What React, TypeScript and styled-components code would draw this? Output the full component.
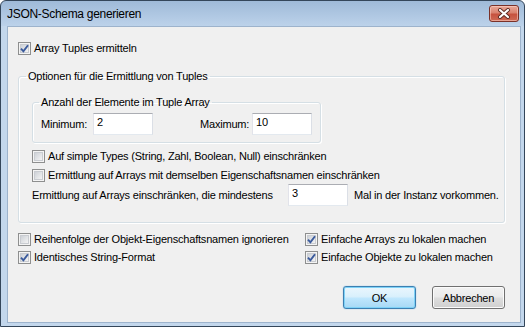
import styled, { createGlobalStyle } from 'styled-components';

const GlobalStyle = createGlobalStyle`
  html, body {
    margin: 0;
    padding: 0;
    background: #ffffff;
  }
  body {
    font-family: 'Liberation Sans', Arial, sans-serif;
    font-size: 11px;
    letter-spacing: -0.2px;
    color: #000000;
  }
`;

const Window = styled.div`
  box-sizing: border-box;
  width: 525px;
  height: 327px;
  border: 1px solid #34465a;
  border-radius: 6px 6px 0 0;
  padding: 0 3px 3px 6px;
  display: flex;
  flex-direction: column;
  background: linear-gradient(
    to bottom,
    #9fbad8 0px,
    #bcd2ea 25px,
    #c3d7ec 25px,
    #c3d7ec 100%
  );
`;

const TitleBar = styled.div`
  height: 25px;
  display: flex;
  justify-content: space-between;
  align-items: center;
`;

const Title = styled.span`
  font-size: 12px;
  letter-spacing: -0.3px;
  line-height: 14px;
`;

const CloseButton = styled.div`
  align-self: flex-start;
  margin: 4px 2px 0 0;
  box-sizing: border-box;
  width: 30px;
  height: 17px;
  border: 1px solid #7a3128;
  border-radius: 3px;
  background: linear-gradient(to bottom, #e9a897 0%, #d9826f 45%, #c6523f 55%, #cf6a55 100%);
  box-shadow: inset 0 0 0 1px rgba(255, 220, 210, 0.5);
  display: flex;
  align-items: center;
  justify-content: center;
`;

const Client = styled.div`
  flex: 1;
  display: flex;
  flex-direction: column;
  padding: 15px 15px 0 10px;
  border: 1px solid #9db3cc;
  background: #f0f0f0;
`;

const Option = styled.label`
  display: flex;
  align-items: center;
  gap: 3px;
  height: 13px;
  line-height: 13px;
  white-space: nowrap;
`;

const Box = styled.svg`
  flex-shrink: 0;
  display: block;
`;

const Group = styled.fieldset<{ $width?: number; $gap?: number }>`
  margin: ${({ $gap }) => $gap ?? 0}px 0 0 0;
  padding: 0;
  width: ${({ $width }) => ($width ? `${$width}px` : 'auto')};
  box-sizing: border-box;
  min-width: 0;
  border: 1px solid #d5dfe5;
  border-radius: 3px;
  box-shadow: inset 1px 1px 0 #ffffff, 1px 1px 0 #ffffff;
`;

const GroupTitle = styled.legend<{ $offset: number }>`
  margin-left: ${({ $offset }) => $offset}px;
  padding: 0 2px;
  line-height: 13px;
`;

const GroupBody = styled.div<{ $pad: string }>`
  display: flex;
  flex-direction: column;
  padding: ${({ $pad }) => $pad};
`;

const FieldRow = styled.div<{ $top?: number }>`
  display: flex;
  align-items: center;
  margin-top: ${({ $top }) => $top ?? 0}px;
`;

const FieldLabel = styled.span<{ $width: number; $lead?: number }>`
  flex-shrink: 0;
  width: ${({ $width }) => $width}px;
  margin-left: ${({ $lead }) => $lead ?? 0}px;
  white-space: nowrap;
`;

const TextBox = styled.input`
  flex-shrink: 0;
  box-sizing: border-box;
  width: 60px;
  height: 22px;
  margin: 0;
  padding: 1px 3px 5px;
  border: 1px solid;
  border-color: #abadb3 #dbdfe6 #e3e9ef #e2e3ea;
  background: #ffffff;
  font: inherit;
  letter-spacing: inherit;
  color: #000000;
  outline: none;
`;

const Trailing = styled.span`
  flex-shrink: 0;
  margin-left: 6px;
  white-space: nowrap;
`;

const Stack = styled.div<{ $top: number; $gap: number }>`
  display: flex;
  flex-direction: column;
  gap: ${({ $gap }) => $gap}px;
  margin-top: ${({ $top }) => $top}px;
`;

const OptionsGrid = styled.div`
  display: grid;
  grid-template-columns: 287px auto;
  row-gap: 5px;
  margin-top: 10px;
`;

const ButtonBar = styled.div`
  margin-top: auto;
  margin-bottom: 13px;
  display: flex;
  justify-content: flex-end;
  gap: 16px;
`;

const Button = styled.button<{ $primary?: boolean }>`
  box-sizing: border-box;
  width: 73px;
  height: 23px;
  margin: 0;
  padding: 0;
  font: inherit;
  letter-spacing: inherit;
  color: #000000;
  border-radius: 3px;
  border: 1px solid ${({ $primary }) => ($primary ? '#3c7fb1' : '#707070')};
  background: ${({ $primary }) =>
    $primary
      ? 'linear-gradient(to bottom, #eaf6fd 0%, #d9f0fc 45%, #bee6fd 55%, #a7d9f5 100%)'
      : 'linear-gradient(to bottom, #f2f2f2 0%, #ebebeb 45%, #dddddd 55%, #cfcfcf 100%)'};
  box-shadow: ${({ $primary }) =>
    $primary ? 'inset 0 0 0 1px #7ed2f7, 0 0 1px #48a7e6' : 'inset 0 0 0 1px #fbfbfb'};
`;

const CheckBox = ({ checked }: { checked?: boolean }) => (
  <Box width="13" height="13" viewBox="0 0 13 13">
    <defs>
      <linearGradient id="cb-fill" x1="0" y1="0" x2="1" y2="1">
        <stop offset="0" stopColor="#cbcfd5" />
        <stop offset="1" stopColor="#f6f6f6" />
      </linearGradient>
    </defs>
    <rect x="0.5" y="0.5" width="12" height="12" fill="#f4f4f4" stroke="#8e8f8f" />
    <rect x="2.5" y="2.5" width="8" height="8" fill="url(#cb-fill)" stroke="#c9ccd1" />
    {checked && (
      <path d="M3 6.6 L5.4 9.3 L10 3.2" fill="none" stroke="#3a5a9c" strokeWidth="1.9" />
    )}
  </Box>
);

const Check = ({ label, checked }: { label: string; checked?: boolean }) => (
  <Option>
    <CheckBox checked={checked} />
    <span>{label}</span>
  </Option>
);

const App = () => {
  return (
    <>
      <GlobalStyle />
      <Window>
        <TitleBar>
          <Title>JSON-Schema generieren</Title>
          <CloseButton>
            <svg width="14" height="11" viewBox="0 0 14 11">
              <path d="M3 2 L11 9 M11 2 L3 9" stroke="#5b2a22" strokeWidth="4" strokeLinecap="round" />
              <path d="M3 2 L11 9 M11 2 L3 9" stroke="#ffffff" strokeWidth="2.2" strokeLinecap="round" />
            </svg>
          </CloseButton>
        </TitleBar>
        <Client>
          <Check label="Array Tuples ermitteln" checked />
          <Group $gap={15}>
            <GroupTitle $offset={7}>Optionen für die Ermittlung von Tuples</GroupTitle>
            <GroupBody $pad="13px 13px 16px 13px">
              <Group $width={289}>
                <GroupTitle $offset={6}>Anzahl der Elemente im Tuple Array</GroupTitle>
                <GroupBody $pad="4px 0 7px 8px">
                  <FieldRow>
                    <FieldLabel $width={52}>Minimum:</FieldLabel>
                    <TextBox defaultValue="2" />
                    <FieldLabel $width={52} $lead={47}>Maximum:</FieldLabel>
                    <TextBox defaultValue="10" />
                  </FieldRow>
                </GroupBody>
              </Group>
              <Stack $top={7} $gap={6}>
                <Check label="Auf simple Types (String, Zahl, Boolean, Null) einschränken" />
                <Check label="Ermittlung auf Arrays mit demselben Eigenschaftsnamen einschränken" />
              </Stack>
              <FieldRow $top={2}>
                <FieldLabel $width={256}>Ermittlung auf Arrays einschränken, die mindestens</FieldLabel>
                <TextBox defaultValue="3" />
                <Trailing>Mal in der Instanz vorkommen.</Trailing>
              </FieldRow>
            </GroupBody>
          </Group>
          <OptionsGrid>
            <Check label="Reihenfolge der Objekt-Eigenschaftsnamen ignorieren" />
            <Check label="Einfache Arrays zu lokalen machen" checked />
            <Check label="Identisches String-Format" checked />
            <Check label="Einfache Objekte zu lokalen machen" checked />
          </OptionsGrid>
          <ButtonBar>
            <Button $primary>OK</Button>
            <Button>Abbrechen</Button>
          </ButtonBar>
        </Client>
      </Window>
    </>
  );
};

export default App;
